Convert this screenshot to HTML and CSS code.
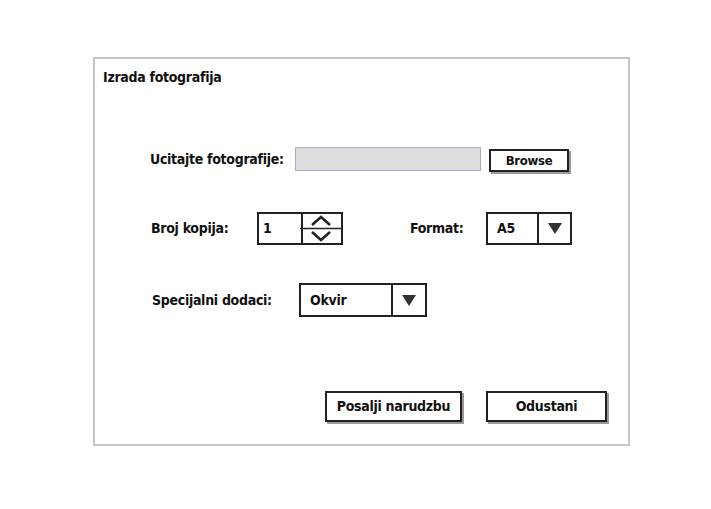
FILE: index.html
```html
<!DOCTYPE html>
<html lang="hr">
<head>
    <meta charset="UTF-8">
    <meta name="viewport" content="width=device-width, initial-scale=1.0">
    <title>Izrada fotografija</title>
    <link rel="stylesheet" href="styles.css">
</head>
<body>
    <div class="frame">
        <div class="title">Izrada fotografija</div>

        <div class="row row-upload">
            <label class="label label-upload">Ucitajte fotografije:</label>
            <div class="file-input"></div>
            <button type="button" class="btn btn-browse">Browse</button>
        </div>

        <div class="row row-copies">
            <label class="label label-copies">Broj kopija:</label>
            <div class="spinner">
                <span class="spinner-value">1</span>
                <span class="spinner-arrows">
                    <svg width="38" height="29" viewBox="0 0 38 29">
                        <line x1="-3" y1="14.5" x2="38" y2="14.5" stroke="#222" stroke-width="1.6"/>
                        <polyline points="9,11 18,3 27,11" fill="none" stroke="#222" stroke-width="2.6"/>
                        <polyline points="9,18 18,26 27,18" fill="none" stroke="#222" stroke-width="2.6"/>
                    </svg>
                </span>
            </div>
            <label class="label label-format">Format:</label>
            <div class="select select-format">
                <span class="select-value">A5</span>
                <span class="select-arrow"><span class="triangle"></span></span>
            </div>
        </div>

        <div class="row row-extras">
            <label class="label label-extras">Specijalni dodaci:</label>
            <div class="select select-extras">
                <span class="select-value">Okvir</span>
                <span class="select-arrow"><span class="triangle"></span></span>
            </div>
        </div>

        <div class="row row-actions">
            <button type="button" class="btn btn-send">Posalji narudzbu</button>
            <button type="button" class="btn btn-cancel">Odustani</button>
        </div>
    </div>
</body>
</html>
```

FILE: styles.css
```css
body {
    margin: 0;
    background: #fff;
    font-family: "DejaVu Sans Condensed", "Liberation Sans", sans-serif;
    font-weight: bold;
    font-size: 14px;
    letter-spacing: -0.3px;
    color: #111;
}

.frame {
    box-sizing: border-box;
    width: 537px;
    height: 389px;
    margin: 57px 0 0 93px;
    border: 2px solid #c6c6c6;
}

.title {
    margin: 9px 0 0 8px;
    line-height: 18px;
}

.row {
    display: flex;
    align-items: center;
}

.label {
    line-height: 18px;
    white-space: nowrap;
}

/* row 1 */
.row-upload {
    height: 24px;
    margin-top: 61px;
    padding-left: 55px;
}

.label-upload {
    width: 145px;
}

.file-input {
    box-sizing: border-box;
    width: 186px;
    height: 24px;
    background: #dcdcdc;
    border: 1px solid #a4abd6;
}

.btn {
    box-sizing: border-box;
    font-family: inherit;
    font-weight: bold;
    font-size: 14px;
    letter-spacing: -0.3px;
    color: #111;
    background: #fff;
    border: 2px solid #222;
    box-shadow: 2px 2px 0 #9a9a9a;
    padding: 0;
    cursor: pointer;
}

.btn-browse {
    width: 80px;
    height: 23px;
    margin-left: 8px;
    margin-top: 2px;
    font-size: 13px;
}

/* row 2 */
.row-copies {
    height: 34px;
    margin-top: 40px;
    padding-left: 56px;
}

.label-copies {
    width: 106px;
}

.spinner {
    box-sizing: border-box;
    display: flex;
    width: 86px;
    height: 33px;
    border: 2px solid #222;
}

.spinner-value {
    width: 45px;
    border-right: 2px solid #222;
    padding-left: 4px;
    line-height: 28px;
}

.spinner-arrows {
    display: flex;
}

.spinner-arrows svg {
    overflow: visible;
}

.label-format {
    width: 76px;
    margin-left: 67px;
}

.select {
    box-sizing: border-box;
    display: flex;
    border: 2px solid #222;
}

.select-value {
    flex: 1;
    padding-left: 9px;
    border-right: 2px solid #222;
    display: flex;
    align-items: center;
}

.select-arrow {
    display: flex;
    align-items: center;
    justify-content: center;
}

.triangle {
    width: 0;
    height: 0;
    border-left: 7px solid transparent;
    border-right: 7px solid transparent;
    border-top: 11px solid #333;
}

.select-format {
    width: 86px;
    height: 33px;
}

.select-format .select-arrow {
    width: 31px;
}

/* row 3 */
.row-extras {
    height: 34px;
    margin-top: 38px;
    padding-left: 57px;
}

.label-extras {
    width: 147px;
}

.select-extras {
    width: 128px;
    height: 34px;
}

.select-extras .select-arrow {
    width: 32px;
}

/* actions */
.row-actions {
    height: 32px;
    margin-top: 73px;
    padding-left: 230px;
}

.btn-send {
    width: 137px;
    height: 31px;
}

.btn-cancel {
    width: 121px;
    height: 31px;
    margin-left: 24px;
}
```
